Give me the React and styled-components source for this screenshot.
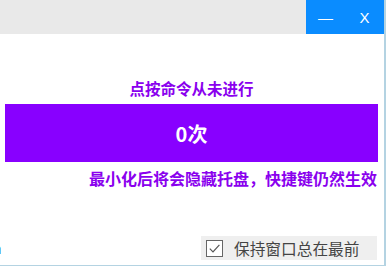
import React from 'react'
import styled, { createGlobalStyle } from 'styled-components'

const GlobalStyle = createGlobalStyle`
  html, body {
    margin: 0;
    padding: 0;
    background: #ffffff;
  }
  body {
    font-family: "Noto Sans CJK SC", "Liberation Sans", sans-serif;
  }
`

const Page = styled.div`
  width: 386px;
  height: 273px;
  background: #ffffff;
  overflow: hidden;
`

const Window = styled.div`
  width: 384px;
  height: 265px;
  border-right: 2px solid #b4d3e2;
  border-bottom: 1px solid #b4d3e2;
  display: flex;
  flex-direction: column;
`

const TitleBar = styled.div`
  height: 34px;
  display: flex;
  background: #e9e9e9;
`

const Spacer = styled.div`
  flex: 1;
`

const Controls = styled.div`
  width: 78px;
  display: flex;
  background: #0a8cff;
`

const CtrlButton = styled.div`
  flex: 1;
  display: flex;
  align-items: center;
  justify-content: center;
  color: #ffffff;
  font-family: "Liberation Sans", sans-serif;
  font-size: ${p => p.$size || 14}px;
  padding-top: 1px;
`

const Content = styled.div`
  flex: 1;
  display: flex;
  flex-direction: column;
  padding: 0 6px 0 5px;
`

const Heading = styled.div`
  margin-top: 45px;
  height: 18px;
  line-height: 18px;
  text-align: center;
  color: #8a00ee;
  font-size: 15.5px;
  font-weight: 700;
`

const Counter = styled.div`
  margin-top: 7px;
  height: 58px;
  background: #8800ff;
  display: flex;
  align-items: center;
  justify-content: center;
  color: #ffffff;
  font-size: 20px;
  font-weight: 700;
`

const Hint = styled.div`
  margin-top: 6px;
  text-align: right;
  color: #8a00ee;
  font-size: 16px;
  font-weight: 700;
  line-height: 20px;
  padding-right: 1px;
`

const Footer = styled.div`
  margin-top: auto;
  margin-bottom: 5px;
  margin-left: -5px;
  display: flex;
  align-items: center;
  justify-content: space-between;
`

const Link = styled.span`
  color: #1877c9;
  font-size: 14px;
  margin-left: -7px;
`

const Check = styled.label`
  display: flex;
  align-items: center;
  gap: 11px;
  width: 171px;
  height: 24px;
  padding-left: 5px;
  margin-right: 1px;
  background: #efefef;
  color: #444444;
  font-size: 15.7px;
`

const Box = styled.span`
  width: 15px;
  height: 15px;
  border: 1px solid #666666;
  background: #ffffff;
  display: flex;
  align-items: center;
  justify-content: center;
`

export default function App() {
  return (
    <Page>
      <GlobalStyle />
      <Window>
        <TitleBar>
          <Spacer />
          <Controls>
            <CtrlButton $size={15}>—</CtrlButton>
            <CtrlButton $size={15}>X</CtrlButton>
          </Controls>
        </TitleBar>
        <Content>
          <Heading>点按命令从未进行</Heading>
          <Counter>0次</Counter>
          <Hint>最小化后将会隐藏托盘，快捷键仍然生效</Hint>
          <Footer>
            <Link>n</Link>
            <Check>
              <Box>
                <svg width="13" height="13" viewBox="0 0 13 13">
                  <path d="M1.8 6.6 L5 9.8 L11.4 2.8" fill="none" stroke="#555" strokeWidth="1.2" />
                </svg>
              </Box>
              保持窗口总在最前
            </Check>
          </Footer>
        </Content>
      </Window>
    </Page>
  )
}
